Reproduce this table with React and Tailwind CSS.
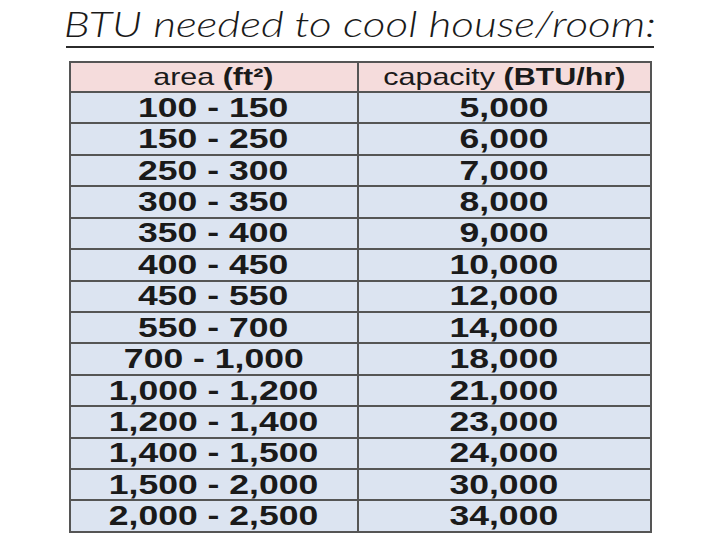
import React from "react";

const rows = [
    ["100 - 150", "5,000"],
    ["150 - 250", "6,000"],
    ["250 - 300", "7,000"],
    ["300 - 350", "8,000"],
    ["350 - 400", "9,000"],
    ["400 - 450", "10,000"],
    ["450 - 550", "12,000"],
    ["550 - 700", "14,000"],
    ["700 - 1,000", "18,000"],
    ["1,000 - 1,200", "21,000"],
    ["1,200 - 1,400", "23,000"],
    ["1,400 - 1,500", "24,000"],
    ["1,500 - 2,000", "30,000"],
    ["2,000 - 2,500", "34,000"],
];

const Wide = ({ children, className = "" }) => (
    <span className={"inline-block scale-x-[1.27] " + className}>
        {children}
    </span>
);

export default function App() {
    return (
        <div className="w-[720px] h-[542px] bg-white text-[#1a1a1a] overflow-hidden">
            <div className="mx-auto w-[588px] pt-[5px] pb-[3px] border-b-2 border-[#2b2b2b] text-center">
                <span className="inline-block font-['Lato',sans-serif] font-light italic text-[36px] leading-[36px] scale-x-[1.23]">
                    BTU needed to cool house/room:
                </span>
            </div>

            <div className="mx-auto mt-[13px] w-[583px] border-2 border-[#555555] font-['Liberation_Sans',Arial,sans-serif]">
                <div className="grid grid-cols-[288px_1fr] h-[28px] bg-[#f5dcdc] text-[24px] leading-none">
                    <div className="flex items-center justify-center border-r-2 border-[#555555]">
                        <Wide>
                            area <b>(ft²)</b>
                        </Wide>
                    </div>
                    <div className="flex items-center justify-center">
                        <Wide>
                            capacity <b>(BTU/hr)</b>
                        </Wide>
                    </div>
                </div>
                {rows.map(([area, btu]) => (
                    <div
                        key={area}
                        className="grid grid-cols-[288px_1fr] h-[31.43px] border-t-2 border-[#555555] bg-[#dce4f1] text-[28px] font-bold leading-none"
                    >
                        <div className="flex items-center justify-center border-r-2 border-[#555555]">
                            <Wide>{area}</Wide>
                        </div>
                        <div className="flex items-center justify-center">
                            <Wide>{btu}</Wide>
                        </div>
                    </div>
                ))}
            </div>
        </div>
    );
}
